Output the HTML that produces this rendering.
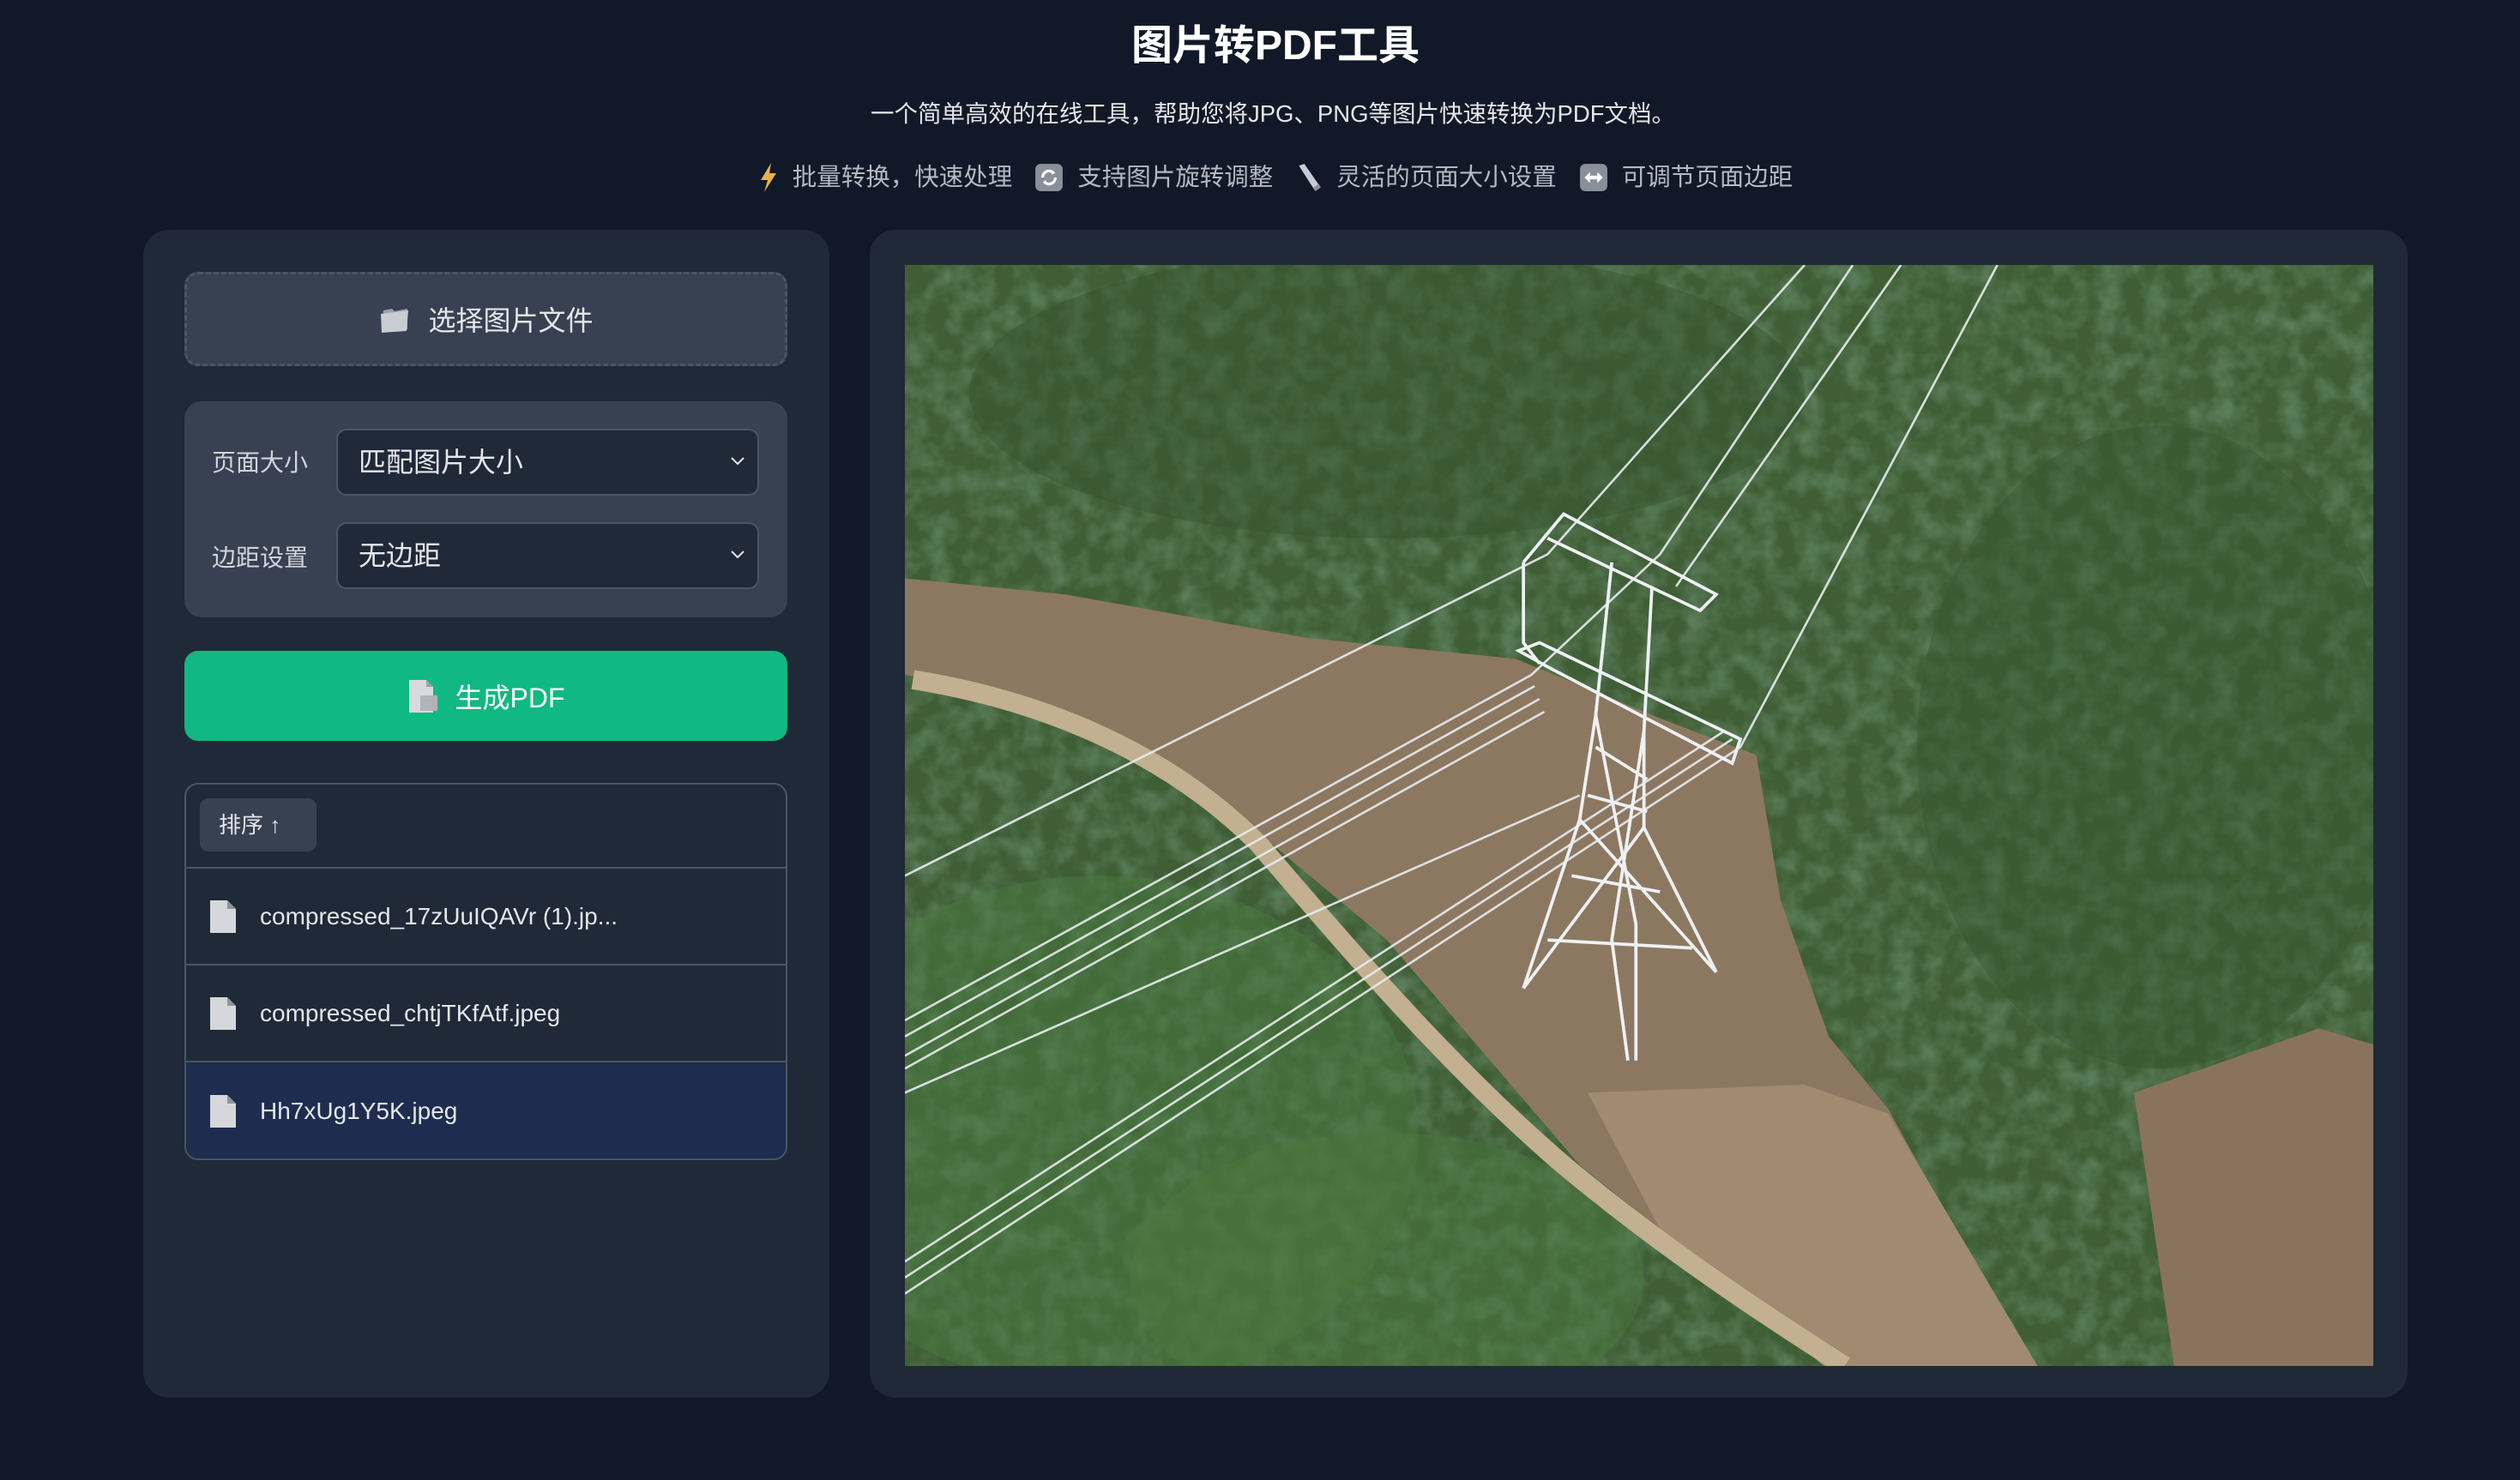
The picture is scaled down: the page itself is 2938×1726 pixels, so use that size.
<!DOCTYPE html>
<html><head><meta charset="utf-8">
<style>
*{box-sizing:border-box;margin:0;padding:0}
body{width:2938px;height:1726px;background:#111827;font-family:"Liberation Sans","Noto Sans CJK SC",sans-serif;position:relative;overflow:hidden;color:#e5e7eb}
.abs{position:absolute}
.title{left:0;width:2974px;top:22px;text-align:center;font-size:48px;font-weight:bold;color:#fff;line-height:64px}
.sub{left:0;width:2968px;top:113px;text-align:center;font-size:27.5px;color:#e5e7eb;line-height:40px}
.feat{left:0;width:2974px;top:186px;display:flex;justify-content:center;align-items:center;font-size:28.5px;color:#b4b9c2;line-height:42px}
.feat span{margin:0 26px 0 16px}
.feat svg{display:block}
.panel{background:#1f2937;border-radius:30px}
.btnsel{left:215px;top:317px;width:703px;height:110px;background:#374151;border:3px dashed #4b5563;border-radius:16px;display:flex;align-items:center;justify-content:center;font-size:32px;color:#e5e7eb}
.set{left:215px;top:468px;width:703px;height:252px;background:#374151;border-radius:20px}
.lbl{font-size:28px;color:#d1d5db;left:247px}
.sel{left:392px;width:493px;height:78px;background:#1f2937;border:2px solid #4b5563;border-radius:12px;font-size:32px;color:#e5e7eb;padding-left:24px;line-height:74px}
.sel svg{position:absolute;right:14px;top:30px}
.gen{left:215px;top:759px;width:703px;height:105px;background:#10b981;border-radius:16px;display:flex;align-items:center;justify-content:center;font-size:32px;color:#fff}
.list{left:215px;top:913px;width:703px;height:440px;border:2px solid #4b5563;border-radius:16px;overflow:hidden}
.row{position:absolute;left:0;width:699px;height:113px;border-top:2px solid #4b5563;display:flex;align-items:center;font-size:28px;color:#e5e7eb}
.row svg{margin-left:27px;margin-right:27px}
</style></head><body>
<div class="abs title">图片转PDF工具</div>
<div class="abs sub">一个简单高效的在线工具，帮助您将JPG、PNG等图片快速转换为PDF文档。</div>
<div class="abs feat">
<svg width="24" height="36" viewBox="0 0 24 36"><path d="M15 1 L3 21 L11 21 L7 35 L21 13 L13 13 Z" fill="#e8b04a"/></svg><span>批量转换，快速处理</span>
<svg width="34" height="34" viewBox="0 0 32 32"><rect x="1" y="1" width="30" height="30" rx="6" fill="#8a9099"/><path d="M9 16a7 7 0 0 1 12-5M23 16a7 7 0 0 1-12 5" stroke="#fff" stroke-width="3" fill="none"/><path d="M19 8l4 3-4 2zM13 24l-4-3 4-2z" fill="#fff"/></svg><span>支持图片旋转调整</span>
<svg width="32" height="36" viewBox="0 0 30 34"><path d="M4 4 L10 2 L28 28 L22 32 Z" fill="#c8ccd2"/><path d="M22 32 L28 28 L26 24 L20 28Z" fill="#8a9099"/></svg><span>灵活的页面大小设置</span>
<svg width="34" height="34" viewBox="0 0 32 32"><rect x="1" y="1" width="30" height="30" rx="6" fill="#8a9099"/><path d="M6 16l6-6v4h8v-4l6 6-6 6v-4h-8v4z" fill="#fff"/></svg><span style="margin-right:0">可调节页面边距</span>
</div>

<div class="abs panel" style="left:167px;top:268px;width:800px;height:1362px"></div>
<div class="abs panel" style="left:1014px;top:268px;width:1793px;height:1362px"></div>

<div class="abs btnsel"><svg width="40" height="36" viewBox="0 0 40 36" style="margin-right:18px"><path d="M6 8 L16 6 L19 9 L34 6 L34 30 L4 34 Z" fill="#9aa0a6"/><path d="M3 12 L35 8 L33 32 L4 34 Z" fill="#c9ccd0"/></svg>选择图片文件</div>

<div class="abs set"></div>
<div class="abs lbl" style="top:518px">页面大小</div>
<div class="abs sel" style="top:500px">匹配图片大小<svg width="18" height="12" viewBox="0 0 18 12"><path d="M2 2l7 7 7-7" stroke="#e5e7eb" stroke-width="2" fill="none"/></svg></div>
<div class="abs lbl" style="top:629px">边距设置</div>
<div class="abs sel" style="top:609px">无边距<svg width="18" height="12" viewBox="0 0 18 12"><path d="M2 2l7 7 7-7" stroke="#e5e7eb" stroke-width="2" fill="none"/></svg></div>

<div class="abs gen"><svg width="38" height="42" viewBox="0 0 38 42" style="margin-right:18px"><path d="M3 2h20l8 8v30H3z" fill="#d8dadd"/><path d="M23 2v8h8z" fill="#9aa0a6"/><rect x="16" y="20" width="20" height="18" fill="#b0b4b9"/></svg>生成PDF</div>

<div class="abs list">
<div class="abs" style="left:16px;top:16px;width:136px;height:62px;background:#374151;border-radius:10px;font-size:26px;line-height:62px;padding-left:22px;color:#e5e7eb">排序 ↑</div>
<div class="row" style="top:96px"><svg width="32" height="40" viewBox="0 0 32 40"><path d="M1 1h20l10 10v28H1z" fill="#d5d7da"/><path d="M21 1v10h10z" fill="#8f949a"/></svg>compressed_17zUuIQAVr (1).jp...</div>
<div class="row" style="top:209px"><svg width="32" height="40" viewBox="0 0 32 40"><path d="M1 1h20l10 10v28H1z" fill="#d5d7da"/><path d="M21 1v10h10z" fill="#8f949a"/></svg>compressed_chtjTKfAtf.jpeg</div>
<div class="row" style="top:322px;background:#1e2d4f;height:116px"><svg width="32" height="40" viewBox="0 0 32 40"><path d="M1 1h20l10 10v28H1z" fill="#d5d7da"/><path d="M21 1v10h10z" fill="#8f949a"/></svg>Hh7xUg1Y5K.jpeg</div>
</div>

<svg class="abs" style="left:1055px;top:309px" width="1712" height="1284" viewBox="0 0 914 685" preserveAspectRatio="none">
<defs>
<filter id="tex" x="0" y="0" width="100%" height="100%">
<feTurbulence type="fractalNoise" baseFrequency="0.07" numOctaves="3" seed="4"/>
<feColorMatrix type="matrix" values="0 0 0 0 0.10  0 0 0 0 0.20  0 0 0 0 0.10  0 0 0 2.2 -0.8"/>
</filter>
</defs>
<rect width="914" height="685" fill="#3f5e35"/>
<rect width="914" height="685" filter="url(#tex)" opacity="1"/>
<ellipse cx="120" cy="540" rx="200" ry="160" fill="#4a7a3e" opacity="0.45"/>
<ellipse cx="300" cy="630" rx="160" ry="90" fill="#4c7a3f" opacity="0.45"/>
<ellipse cx="780" cy="300" rx="150" ry="200" fill="#355530" opacity="0.4"/>
<ellipse cx="300" cy="80" rx="260" ry="90" fill="#35532f" opacity="0.4"/>
<polygon points="0,195 100,205 250,232 380,245 470,282 530,305 545,395 575,480 612,525 700,685 575,685 420,560 300,420 180,320 60,265 0,255" fill="#8c7861"/>
<polygon points="425,515 560,510 612,528 705,685 572,685 470,600" fill="#a08a70"/>
<polygon points="765,515 880,475 914,485 914,685 790,685" fill="#8a735d"/>
<path d="M5,258 C80,270 160,300 220,360 C280,430 340,500 410,560 C470,610 530,650 585,685" stroke="#c2b090" stroke-width="12" fill="none"/>
<g stroke="#e8ecef" stroke-width="1.4" fill="none" opacity="0.9">
<path d="M0,470 L390,255 L470,180 L590,0"/>
<path d="M0,480 L392,262"/><path d="M0,492 L395,270"/><path d="M0,500 L398,278"/>
<path d="M0,640 L520,300 L680,0"/><path d="M0,630 L515,295"/><path d="M0,620 L510,290"/>
<path d="M0,380 L400,180 L560,0"/>
<path d="M0,515 L420,330"/><path d="M480,200 L620,0"/>
</g>
<g stroke="#eef1f3" stroke-width="2" fill="none">
<path d="M385,185 L410,155 L505,205 L495,215 L400,170"/>
<path d="M385,185 L385,235 L395,248"/>
<path d="M382,240 L395,235 L520,295 L515,310 L400,250 Z"/>
<path d="M440,185 L430,280 L420,345 L385,450"/>
<path d="M465,200 L460,290 L460,350 L505,440"/>
<path d="M430,280 L455,410 L455,495"/>
<path d="M460,290 L440,420 L450,495"/>
<path d="M420,345 L505,440 M460,350 L385,450"/>
<path d="M430,300 L462,320 M425,330 L462,340 M415,380 L470,390 M400,420 L490,425"/>
</g>
</svg>
</body></html>
